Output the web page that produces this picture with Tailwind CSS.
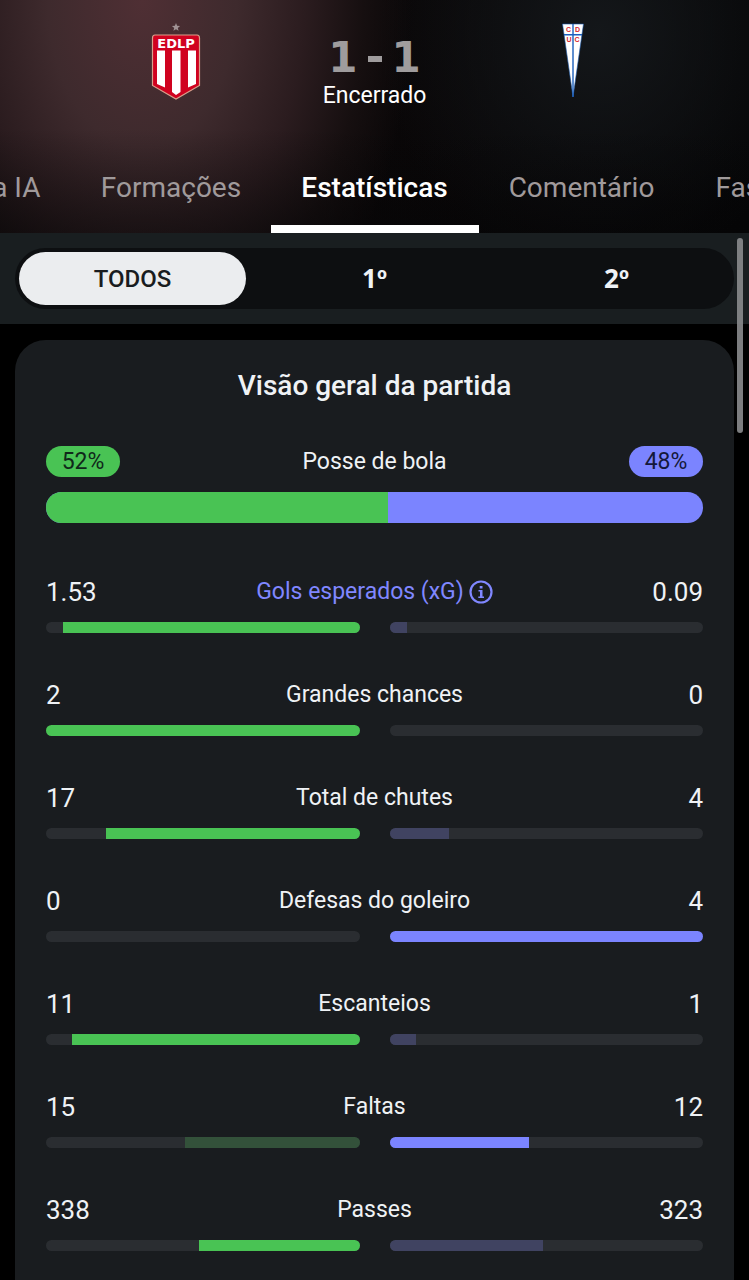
<!DOCTYPE html>
<html lang="pt-BR">
<head>
<meta charset="utf-8">
<meta name="viewport" content="width=device-width, initial-scale=1">
<title>Estatísticas da partida</title>
<script src="https://cdn.jsdelivr.net/npm/@tailwindcss/browser@4"></script>
</head>
<body class="relative flex min-h-screen flex-col overflow-x-hidden bg-black font-[Roboto,sans-serif] text-[#eff2f5]">

<header class="bg-[linear-gradient(180deg,transparent_55%,rgba(5,5,6,0.5)_100%),radial-gradient(ellipse_270px_420px_at_19%_0%,#4f2f34_0%,#3e2a2d_35%,#2b1c1f_60%,#160f10_82%,transparent_100%),radial-gradient(ellipse_220px_240px_at_80%_15%,#14171a_0%,transparent_100%),linear-gradient(90deg,#2a1d1f_0%,#0a0708_45%,#050506_100%)]">
  <div class="grid h-[142px] grid-cols-[1fr_45px_1fr] items-start">
    <svg class="mt-[22px] h-20 w-[52px] justify-self-center" viewBox="0 0 52 80" role="img" aria-label="EDLP">
      <path d="M26 1l1.100 2.800 3 .2-2.300 1.900.8 2.900L26 7.200l-2.600 1.600.8-2.900L21.900 4l3-.2z" fill="#a09294"/>
      <path d="M5 13h42q2.500 0 2.500 3v47.500L26 77 2.500 63.500V16q0-3 2.500-3z" fill="#d0021f" stroke="#d9a08c" stroke-width="1.200"/>
      <text x="26" y="25.500" text-anchor="middle" font-family="DejaVu Sans" font-weight="700" font-size="13" fill="#fff">EDLP</text>
      <path d="M7 28.500h8v37L7 62zM22 28.500h8.500V70L26 73l-4-3zM38 28.500h8V62l-8 3.500z" fill="#fff"/>
    </svg>
    <div class="flex flex-col items-center">
      <div class="mt-[34px] flex h-12 items-center gap-[5px] font-['DejaVu_Sans',sans-serif] text-[42px] leading-[48px] font-bold text-[#9f9c9d]"><span>1</span><svg class="h-12 w-6" viewBox="0 0 24 48" role="img" aria-label="-"><path d="M5 22h14v6H5z" fill="#9f9c9d"/></svg><span>1</span></div>
      <div class="text-[23px] leading-7 text-white">Encerrado</div>
    </div>
    <svg class="mt-[22px] h-[78px] w-6 justify-self-center" viewBox="0 0 24 78" role="img" aria-label="CDUC">
      <path d="M1.500 2h21L12 75z" fill="#fff" stroke="#1756a8" stroke-width=".6"/>
      <path d="M12 2v73M3 12.700h18" stroke="#1b5fbd" stroke-width="1.400"/>
      <g font-family="Liberation Sans" font-weight="700" font-size="7" fill="#d8262f" text-anchor="middle"><text x="7.500" y="10">C</text><text x="16.500" y="10">D</text><text x="8" y="19.500">U</text><text x="16" y="19.500">C</text></g>
    </svg>
  </div>

  <nav class="grid h-[91px] grid-cols-[1fr_208px_1fr] text-[28px] leading-8 text-[#a09a9b]" aria-label="Seções">
    <div class="flex justify-end overflow-hidden whitespace-nowrap">
      <a href="#ia" class="shrink-0 px-[31px] pt-[30px]">a IA</a>
      <a href="#formacoes" class="w-[199px] shrink-0 pt-[30px] text-center">Formações</a>
    </div>
    <a href="#estatisticas" aria-current="page" class="border-b-8 border-white pt-[30px] text-center font-medium text-white">Estatísticas</a>
    <div class="flex overflow-hidden whitespace-nowrap">
      <a href="#comentario" class="w-[206px] shrink-0 pt-[30px] text-center">Comentário</a>
      <a href="#fases" class="shrink-0 px-[31px] pt-[30px]">Fas</a>
    </div>
  </nav>
</header>

<div class="bg-[#191e20] px-[15px] py-[15px]">
  <div class="grid h-[61px] grid-cols-3 gap-[15px] rounded-full bg-[#0d0f11] p-1 text-[26px] font-bold">
    <button type="button" aria-pressed="true" class="rounded-full bg-[#ebedef] text-[24px] font-medium text-[#191c20]">TODOS</button>
    <button type="button" aria-pressed="false" class="rounded-full font-['Noto_Sans',sans-serif]">1º</button>
    <button type="button" aria-pressed="false" class="rounded-full font-['Noto_Sans',sans-serif]">2º</button>
  </div>
</div>

<main id="estatisticas" class="mx-[15px] mt-4 flex-1 rounded-t-[31px] bg-[#191c1f] px-[31px] pb-[28px]">
  <h1 class="pt-[29px] text-center text-[28px] leading-[34px] font-medium">Visão geral da partida</h1>
  <section class="mt-[43px]">
    <div class="grid h-[31px] grid-cols-[1fr_auto_1fr] items-center text-[23px] leading-[31px]">
      <span class="w-[74px] rounded-full bg-[#49c354] text-center text-[#10281a]">52%</span>
      <h2>Posse de bola</h2>
      <span class="w-[74px] justify-self-end rounded-full bg-[#7b84ff] text-center text-[#14183a]">48%</span>
    </div>
    <div class="mt-[15px] flex h-[31px] overflow-hidden rounded-full bg-[#7b84ff]"><div class="bg-[#49c354]" style="width:52%"></div></div>
  </section>
  <div id="stats" class="mt-[52px] flex flex-col gap-[45px]"></div>
</main>

<div class="absolute top-[238px] right-[6px] h-[195px] w-[6px] rounded-full bg-[#8a8b8d]/90" aria-hidden="true"></div>

<script>
  const info = '<svg class="h-6 w-6" viewBox="0 0 24 24" fill="none" aria-hidden="true"><circle cx="12" cy="12" r="10.500" stroke="currentColor" stroke-width="2.200"/><path d="M10.700 6h2.800v2.500h-2.800zM9.500 10h4v6.500H15V18H9.300v-1.500H11v-5H9.500z" fill="currentColor"/></svg>';
  const on = ['bg-[#49c354]', 'bg-[#7b84ff]'];
  const off = ['bg-[#33513a]', 'bg-[#404361]'];
  // label, home value, away value, winning side (0 home, 1 away)
  const rows = [
    ['Gols esperados (xG)', '1.53', '0.09', 0],
    ['Grandes chances', '2', '0', 0],
    ['Total de chutes', '17', '4', 0],
    ['Defesas do goleiro', '0', '4', 1],
    ['Escanteios', '11', '1', 0],
    ['Faltas', '15', '12', 1],
    ['Passes', '338', '323', 0]
  ];
  document.getElementById('stats').innerHTML = rows.map(([label, home, away, win], i) => {
    const share = Number(home) / (Number(home) + Number(away)) * 100;
    const title = i === 0
      ? `<button type="button" class="flex items-center gap-[5px] text-[#8087ff]">${label}${info}</button>`
      : `<h2>${label}</h2>`;
    return `<section>
      <div class="grid h-[34px] grid-cols-[1fr_auto_1fr] items-center text-[23px] leading-[34px]">
        <span class="text-[26px]">${home}</span>${title}<span class="text-right text-[26px]">${away}</span>
      </div>
      <div class="mt-[13px] grid grid-cols-2 gap-[30px]">
        <div class="flex h-[11px] justify-end overflow-hidden rounded-full bg-[#2a2d31]"><div class="${win === 0 ? on[0] : off[0]}" style="width:${share}%"></div></div>
        <div class="flex h-[11px] overflow-hidden rounded-full bg-[#2a2d31]"><div class="${win === 1 ? on[1] : off[1]}" style="width:${100 - share}%"></div></div>
      </div>
    </section>`;
  }).join('');
</script>
</body>
</html>
